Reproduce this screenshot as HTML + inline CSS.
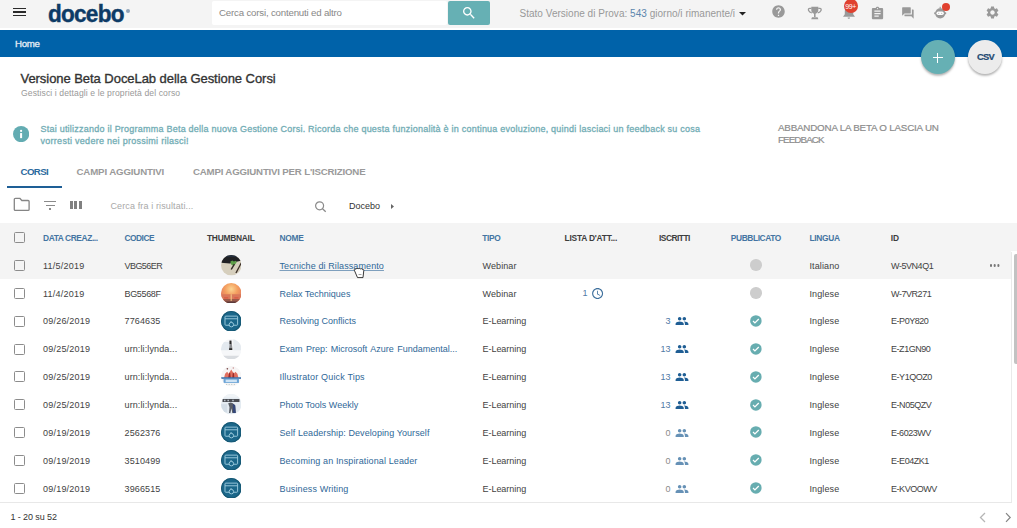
<!DOCTYPE html>
<html><head><meta charset="utf-8">
<style>
*{box-sizing:border-box;margin:0;padding:0}
html,body{width:1017px;height:528px;overflow:hidden;background:#fff}
body{position:relative;font-family:"Liberation Sans",sans-serif;color:#333}
.a{position:absolute;white-space:nowrap}
svg{position:absolute;display:block}
#topbar{position:absolute;left:0;top:0;width:1017px;height:28px;background:#f4f4f4}
#bluebar{position:absolute;left:0;top:30px;width:1017px;height:26.6px;background:#0062a9}

.row{position:absolute;left:0;width:1011px;height:27.84px}
.row .c{position:absolute;top:2px;line-height:27.84px;font-size:9px;color:#424242;white-space:nowrap;letter-spacing:0.12px}
.hd{position:absolute;left:0;top:223px;width:1017px;height:27.8px;background:#f4f4f4}
.hd .c{position:absolute;top:1.8px;line-height:27.8px;font-size:8.4px;font-weight:700;color:#3d3d3d;white-space:nowrap}
.hd .b{color:#4474a2}
.cb{position:absolute;left:13.5px;top:9.2px;width:11px;height:11px;border:1.3px solid #8c8c8c;border-radius:1.5px;background:transparent}
.th{position:absolute;left:220.5px;top:4.3px;width:20.5px;height:20.5px}
.lk{color:#2f6898 !important;letter-spacing:0px !important}
.nb{color:#4f7aa6 !important}
.nb.z{color:#8a8a8a !important}
.clk{position:absolute;left:590.9px;top:8.5px;width:13.2px;height:13.2px}
.ppl{position:absolute;left:674.7px;top:8px;width:14px;height:14px}
.ppl.z{opacity:.68}
.gd{position:absolute;left:750.25px;top:8.4px;width:11.5px;height:11.5px;border-radius:50%;background:#cdcdcd}
.ck{position:absolute;left:749.1px;top:7.6px;width:13.8px;height:13.8px}
.dots{position:absolute;left:989.5px;top:13.4px;width:2.6px;height:2.6px;border-radius:50%;background:#777;box-shadow:3.7px 0 0 #777,7.4px 0 0 #777}
</style></head><body>
<div id="topbar"></div>
<div id="bluebar"></div>

<!-- hamburger -->
<div class="a" style="left:13.3px;top:7.9px;width:12.7px;height:1.35px;background:#2a2a2a"></div>
<div class="a" style="left:13.3px;top:11.3px;width:12.7px;height:1.35px;background:#2a2a2a"></div>
<div class="a" style="left:13.3px;top:14.9px;width:12.7px;height:1.35px;background:#2a2a2a"></div>

<!-- logo -->
<div class="a" id="logo" style="left:48px;top:-1.3px;font-size:24px;font-weight:700;letter-spacing:-0.8px;color:#0d3b66;line-height:30px;transform:scaleX(0.94);transform-origin:0 0;-webkit-text-stroke:0.4px #0d3b66">docebo</div>
<div class="a" style="left:126px;top:9px;width:4px;height:4px;border-radius:50%;background:#8fa3b8"></div>

<!-- search -->
<div class="a" style="left:212px;top:1px;width:235px;height:24px;background:#fff;border-radius:2px"></div>
<div class="a" id="srch" style="left:219px;top:7px;font-size:9.7px;line-height:12px;color:#888;letter-spacing:-0.19px">Cerca corsi, contenuti ed altro</div>
<div class="a" style="left:448px;top:1px;width:42px;height:24px;background:#66b0b4;border-radius:2px"></div>
<svg style="left:461px;top:5px" width="16" height="16" viewBox="0 0 24 24"><path fill="#fff" d="M15.5 14h-.79l-.28-.27C15.41 12.590 16 11.11 16 9.5 16 5.91 13.09 3 9.5 3S3 5.91 3 9.5 5.91 16 9.5 16c1.61 0 3.09-.59 4.230-1.57l.27.28v.79l5 4.99L20.49 19l-4.99-5zm-6 0C7.01 14 5 11.99 5 9.5S7.01 5 9.5 5 14 7.01 14 9.5 11.99 14 9.5 14z"/></svg>

<!-- trial status -->
<div class="a" id="stato" style="left:519.5px;top:8.3px;font-size:10px;line-height:12px;color:#999;letter-spacing:0.02px">Stato Versione di Prova: <span style="color:#5b86ad">543</span> giorno/i rimanente/i</div>
<svg style="left:739px;top:12px" width="7" height="4" viewBox="0 0 7 4"><path d="M0 0h7L3.5 3.6z" fill="#222"/></svg>

<!-- header icons -->
<svg style="left:771px;top:4.3px" width="15" height="15" viewBox="0 0 24 24"><path fill="#999" d="M12 2C6.48 2 2 6.48 2 12s4.48 10 10 10 10-4.48 10-10S17.52 2 12 2zm1 17h-2v-2h2v2zm2.07-7.750l-.9.92C13.45 12.9 13 13.5 13 15h-2v-.5c0-1.1.45-2.1 1.17-2.83l1.24-1.26c.37-.36.59-.86.59-1.41 0-1.1-.9-2-2-2s-2 .9-2 2H8c0-2.210 1.79-4 4-4s4 1.79 4 4c0 .88-.36 1.68-.93 2.25z"/></svg>
<svg style="left:807px;top:6px" width="16" height="14" viewBox="0 0 16 14"><path fill="#999" d="M4.3 .7H11.3V4.3C11.3 6.2 9.9 7.5 8.6 7.8V11H7V7.8C5.7 7.5 4.3 6.2 4.3 4.3zM5 11.3H10.6L11.4 13.3H4.2z"/><path fill="none" stroke="#999" stroke-width="1.3" d="M4.4 2.3H2.7C1.5 2.3 1.2 3.5 1.6 4.5 2.1 5.8 3.3 6.6 4.8 6.8M11.2 2.3H12.9C14.1 2.3 14.4 3.5 14 4.5 13.5 5.8 12.3 6.6 10.8 6.8"/></svg>
<svg style="left:841px;top:4px" width="16" height="16" viewBox="0 0 16 16"><path fill="#999" d="M3.8 7C3.8 4 5.6 2 8 2S12.2 4 12.2 7V10.3L14 12.8H2L3.8 10.3z"/><path fill="#999" d="M6.6 13.5H9C9 14.3 8.5 14.8 7.8 14.8S6.6 14.3 6.6 13.5z"/></svg>
<div class="a" style="left:843.8px;top:-1px;width:13.8px;height:13.8px;border-radius:50%;background:#e0412f;color:#fff;font-size:7px;font-weight:400;line-height:15.6px;text-align:center;letter-spacing:-0.35px">99+</div>
<svg style="left:869.6px;top:5.9px" width="15" height="15" viewBox="0 0 24 24"><path fill="#999" d="M19 3h-4.18C14.4 1.84 13.3 1 12 1c-1.3 0-2.4.84-2.82 2H5c-1.1 0-2 .9-2 2v14c0 1.1.9 2 2 2h14c1.1 0 2-.9 2-2V5c0-1.1-.9-2-2-2zm-7 0c.55 0 1 .45 1 1s-.45 1-1 1-1-.45-1-1 .45-1 1-1zm2 14H7v-2h7v2zm3-4H7v-2h10v2zm0-4H7V7h10v2z"/></svg>
<svg style="left:901.35px;top:5.65px" width="13.8" height="13.8" viewBox="0 0 24 24"><path fill="#999" d="M21 6h-2v9H6v2c0 .55.45 1 1 1h11l4 4V7c0-.55-.45-1-1-1zm-4 6V3c0-.55-.45-1-1-1H3c-.55 0-1 .45-1 1v14l4-4h10c.55 0 1-.45 1-1z"/></svg>
<!-- robot -->
<svg style="left:933px;top:6px" width="14" height="13" viewBox="0 0 14 13"><circle cx="7.2" cy="7.3" r="5.1" fill="#999"/><rect x="1.2" y="6.3" width="1.6" height="2" rx=".5" fill="#999"/><rect x="11.6" y="6.3" width="1.6" height="2" rx=".5" fill="#999"/><rect x="6.6" y="0.8" width="1.2" height="2" fill="#999"/><rect x="3.5" y="5.6" width="7.3" height="3.4" rx="1.7" fill="#fff"/><circle cx="5.7" cy="7.3" r=".55" fill="#aaa"/><circle cx="8.7" cy="7.3" r=".55" fill="#aaa"/></svg>
<div class="a" style="left:941.8px;top:2.5px;width:8.2px;height:8.2px;border-radius:50%;background:#e0402e"></div>
<svg style="left:984.7px;top:5px" width="15" height="15" viewBox="0 0 24 24"><path fill="#999" d="M19.14 12.94c.04-.3.06-.61.06-.94 0-.32-.02-.64-.07-.94l2.03-1.58c.18-.14.23-.41.12-.61l-1.92-3.32c-.12-.22-.37-.29-.59-.22l-2.39.96c-.5-.38-1.03-.7-1.62-.94l-.36-2.54c-.04-.24-.24-.41-.48-.41h-3.84c-.24 0-.43.17-.47.41l-.36 2.54c-.59.24-1.13.57-1.62.94l-2.39-.96c-.22-.08-.47 0-.59.22L2.74 8.87c-.12.21-.08.47.12.61l2.03 1.58c-.05.3-.09.63-.09.94s.02.64.07.94l-2.03 1.58c-.18.14-.23.41-.12.61l1.92 3.32c.12.22.37.29.59.22l2.39-.96c.5.38 1.03.7 1.62.94l.36 2.54c.05.24.24.41.48.41h3.84c.24 0 .44-.17.47-.41l.36-2.54c.59-.24 1.13-.56 1.62-.94l2.39.96c.22.08.47 0 .59-.22l1.92-3.32c.12-.22.07-.47-.12-.61l-2.01-1.58zM12 15.6c-1.98 0-3.6-1.62-3.6-3.6s1.62-3.6 3.6-3.6 3.6 1.62 3.6 3.6-1.62 3.6-3.6 3.6z"/></svg>

<!-- breadcrumb -->
<div class="a" id="home" style="left:15px;top:38px;font-size:9.7px;line-height:12px;color:#e6eef6;font-weight:400;letter-spacing:-0.3px;-webkit-text-stroke:0.3px #e6eef6">Home</div>

<!-- FABs -->
<div class="a" style="left:920.6px;top:39.7px;width:34px;height:34px;border-radius:50%;background:#66b0b4;box-shadow:0 1.8px 2.2px rgba(0,0,0,.3)"></div>
<div class="a" style="left:932.6px;top:56.9px;width:10px;height:1.4px;background:#fff"></div>
<div class="a" style="left:936.9px;top:52.6px;width:1.4px;height:10px;background:#fff"></div>
<div class="a" style="left:968.2px;top:39.7px;width:34.3px;height:34.3px;border-radius:50%;background:#ececec;box-shadow:0 1.8px 2.2px rgba(0,0,0,.3)"></div>
<div class="a" id="csv" style="left:977px;top:50.7px;font-size:9.3px;line-height:12px;font-weight:700;color:#1f4a72;letter-spacing:-0.65px;-webkit-text-stroke:0.2px #1f4a72">CSV</div>

<!-- title -->
<div class="a" id="title" style="left:20.5px;top:70.7px;font-size:13px;line-height:16px;color:#333;letter-spacing:-0.05px;-webkit-text-stroke:0.35px #333">Versione Beta DoceLab della Gestione Corsi</div>
<div class="a" id="sub" style="left:21px;top:87.9px;font-size:8.6px;line-height:10px;color:#999;letter-spacing:0.1px">Gestisci i dettagli e le proprietà del corso</div>


<!-- svg defs -->
<svg width="0" height="0" style="position:absolute">
<defs>
<symbol id="clock" viewBox="0 0 24 24"><path fill="#3d6f9c" d="M11.99 2C6.47 2 2 6.48 2 12s4.47 10 9.99 10C17.52 22 22 17.520 22 12S17.52 2 11.99 2zM12 20c-4.42 0-8-3.58-8-8s3.58-8 8-8 8 3.58 8 8-3.58 8-8 8zm.5-13H11v6l5.25 3.15.75-1.23-4.5-2.67z"/></symbol>
<symbol id="ppl" viewBox="0 0 24 24"><path fill="#1f5e94" d="M16 11c1.66 0 2.99-1.34 2.99-3S17.66 5 16 5c-1.66 0-3 1.34-3 3s1.34 3 3 3zm-8 0c1.66 0 2.99-1.34 2.99-3S9.66 5 8 5C6.34 5 5 6.34 5 8s1.34 3 3 3zm0 2c-2.33 0-7 1.17-7 3.5V19h14v-2.5c0-2.33-4.67-3.5-7-3.5zm8 0c-.29 0-.62.02-.97.05 1.16.84 1.970 1.97 1.97 3.45V19h6v-2.5c0-2.33-4.67-3.5-7-3.5z"/></symbol>
<symbol id="chk" viewBox="0 0 24 24"><circle cx="12" cy="12" r="10" fill="#67adb0"/><path fill="none" stroke="#fff" stroke-width="2.2" d="M7 12.2l3.3 3.3L17 8.8"/></symbol>
<symbol id="t1" viewBox="0 0 20 20"><clipPath id="cp1"><circle cx="10" cy="10" r="10"/></clipPath><g clip-path="url(#cp1)"><rect width="20" height="20" fill="#d6cfbd"/><path d="M0 0h20v5.6L14 6.8 8.7 8.4 0 7.6z" fill="#202124"/><path d="M4 0h12v2H4z" fill="#263447" opacity=".7"/><path d="M9 6.5l2-1.2 1.5 1 2-.8.8 1.6-1.6 2.2-2.2.9-1.4-.6z" fill="#5ea04a"/><path d="M9.3 13.8l3.2-5.2 1.2.6-3.1 5.2z" fill="#2f2a26"/><path d="M14 17.3l5.2-9.8 1.1.6-5.1 9.8z" fill="#3b2f28"/></g></symbol>
<symbol id="t2" viewBox="0 0 20 20"><clipPath id="cp2"><circle cx="10" cy="10" r="10"/></clipPath><radialGradient id="g2" cx=".5" cy=".3" r=".55"><stop offset="0" stop-color="#fbd592"/><stop offset=".55" stop-color="#f4a060"/><stop offset="1" stop-color="#e58060"/></radialGradient><g clip-path="url(#cp2)"><rect width="20" height="20" fill="url(#g2)"/><path d="M0 11h20v9H0z" fill="#d9785a"/><path d="M0 15.5h20v4.5H0z" fill="#9a5a4a"/><path d="M0 18h20v2H0z" fill="#5a3a3a"/><path d="M9.3 11h1.4v6.5H9.3z" fill="#f8cf8a" opacity=".7"/><path d="M3 14h4v1H3zM13 14h4v1h-4z" fill="#d84a3a" opacity=".7"/></g></symbol>
<symbol id="t3" viewBox="0 0 20 20"><circle cx="10" cy="10" r="10" fill="#1b678a"/><circle cx="10" cy="10" r="9.5" fill="none" stroke="#175873" stroke-width="1"/><rect x="3.9" y="5" width="12.3" height="8.9" rx=".8" fill="none" stroke="#9fcde0" stroke-width=".9"/><path d="M3.9 7.6h12.3" stroke="#9fcde0" stroke-width=".9"/><circle cx="10.1" cy="13.3" r="2.2" fill="#1b678a" stroke="#9fcde0" stroke-width=".9"/><path d="M9.8 9.8v1.4" stroke="#9fcde0" stroke-width=".9"/></symbol>
<symbol id="t4" viewBox="0 0 20 20"><clipPath id="cp4"><circle cx="10" cy="10" r="10"/></clipPath><g clip-path="url(#cp4)"><rect width="20" height="20" fill="#f6f7f9"/><path d="M0 3h8v8H0z" fill="#e3e9ef"/><path d="M12 0h8v11h-8z" fill="#e6ebf0"/><path d="M8.3 1.5h2l.5 5 .5 4.3H7.7l.5-4.3z" fill="#8a8c90"/><path d="M8.4 1.6h1.6v3.2H8.4zM8 9h2.8v1.8H8z" fill="#2a2a2a"/><path d="M0 16.3h20v4H0z" fill="#d9dce0"/></g></symbol>
<symbol id="t5" viewBox="0 0 20 20"><clipPath id="cp5"><circle cx="10" cy="10" r="10"/></clipPath><g clip-path="url(#cp5)"><rect width="20" height="20" fill="#f7f5f5"/><path d="M3 11.5l1-4 2-2 1.5 2 2.5-4 2.5 4 1.5-2 2 2 1 4z" fill="#e07060"/><path d="M7 11.5l1-5h1l.5 5zM11 11.5l.5-5h1l.5 5z" fill="#9a2a2a"/><circle cx="6.2" cy="2.8" r=".8" fill="#7a4a4a"/><circle cx="12" cy="2" r=".7" fill="#c58a8a"/><rect x="0" y="11" width="20" height="1.5" fill="#2f6aa8"/><rect x="2.5" y="12.5" width="15" height="4" fill="#6aa3d6"/><rect x="4.5" y="13.3" width="11" height="2.4" fill="#cfe4f5"/><path d="M5 18h10" stroke="#8aa" stroke-width=".6" stroke-dasharray="1 1.5"/></g></symbol>
<symbol id="t6" viewBox="0 0 20 20"><clipPath id="cp6"><circle cx="10" cy="10" r="10"/></clipPath><g clip-path="url(#cp6)"><rect width="20" height="20" fill="#e4ebf1"/><path d="M0 0h20v3.5H0z" fill="#f0f4f7"/><path d="M1.5 4.8h16.5v3H1.5z" fill="#4a4c52"/><path d="M3 5.5h1.4v1.6H3zM6.3 5.5h1.4v1.6H6.3zM11 5.5h1.4v1.6H11z" fill="#c3ccd5"/><path d="M7 9l2.5-.8 2 .8 2.3 2 .6 7.5H11l-.8-4.5-1 4.5H7.8l.5-5.5z" fill="#5a5e66"/><path d="M11.5 9.5l2.3 1.5.6 7.5h-2.6z" fill="#34477a"/><path d="M0 10h6v8H0z" fill="#d3dde6"/></g></symbol>
</defs></svg>

<!-- info banner -->
<svg style="left:13px;top:125.8px" width="16.2" height="16.2" viewBox="0 0 16 16"><circle cx="8" cy="8" r="8" fill="#63acb2"/><rect x="7" y="7" width="2" height="5" fill="#fff"/><circle cx="8" cy="4.9" r="1.1" fill="#fff"/></svg>
<div class="a" id="info1" style="left:40.5px;top:124.2px;font-size:9px;line-height:11.7px;color:#72adb5;font-weight:400;letter-spacing:0.23px;-webkit-text-stroke:0.3px #72adb5">Stai utilizzando il Programma Beta della nuova Gestione Corsi. Ricorda che questa funzionalità è in continua evoluzione, quindi lasciaci un feedback su cosa<br><span style="letter-spacing:0.28px">vorresti vedere nei prossimi rilasci!</span></div>
<div class="a" id="abb" style="left:778px;top:122px;font-size:9.8px;line-height:12.4px;color:#8c8c8c;letter-spacing:-0.2px;-webkit-text-stroke:0.2px #8c8c8c">ABBANDONA LA BETA O LASCIA UN<br><span style="letter-spacing:-0.9px">FEEDBACK</span></div>

<!-- tabs -->
<div class="a" id="tab1" style="left:20.5px;top:165.7px;font-size:9.7px;line-height:12px;font-weight:700;color:#2b6a9e;letter-spacing:-0.6px">CORSI</div>
<div class="a" id="tab2" style="left:76.5px;top:165.7px;font-size:9.7px;line-height:12px;font-weight:700;color:#9a9a9a;letter-spacing:-0.15px">CAMPI AGGIUNTIVI</div>
<div class="a" id="tab3" style="left:193px;top:165.7px;font-size:9.7px;line-height:12px;font-weight:700;color:#9a9a9a;letter-spacing:-0.2px">CAMPI AGGIUNTIVI PER L'ISCRIZIONE</div>
<div class="a" style="left:7px;top:185.5px;width:55px;height:2px;background:#1e5f96"></div>

<!-- toolbar -->
<svg style="left:13.4px;top:197.4px" width="17.5" height="15" viewBox="0 0 17.5 15"><path d="M2.5 1.3h4.3l2 2.2h6.3a1 1 0 0 1 1 1v7.9a1 1 0 0 1-1 1H2.3a1 1 0 0 1-1-1V2.5a1.2 1.2 0 0 1 1.2-1.2z" fill="none" stroke="#858585" stroke-width="1.3" stroke-linejoin="round"/></svg>
<div class="a" style="left:43.9px;top:201.2px;width:12.5px;height:1.25px;background:#8a8a8a"></div>
<div class="a" style="left:46px;top:204.7px;width:8.5px;height:1.25px;background:#8a8a8a"></div>
<div class="a" style="left:48.7px;top:208.3px;width:2.8px;height:1.25px;background:#8a8a8a"></div>
<div class="a" style="left:70px;top:200.5px;width:3px;height:8.8px;background:#808080"></div>
<div class="a" style="left:74.4px;top:200.5px;width:3px;height:8.8px;background:#808080"></div>
<div class="a" style="left:78.8px;top:200.5px;width:3px;height:8.8px;background:#808080"></div>
<div class="a" id="cfr" style="left:110.5px;top:200px;font-size:9px;line-height:12px;color:#a8a8a8;letter-spacing:0.12px">Cerca fra i risultati...</div>
<svg style="left:313.5px;top:200px" width="13" height="13" viewBox="0 0 13 13"><circle cx="5.6" cy="5.8" r="4" fill="none" stroke="#8a8a8a" stroke-width="1.2"/><path d="M8.5 8.7l3.2 3" stroke="#8a8a8a" stroke-width="1.3"/></svg>
<div class="a" id="doc" style="left:349px;top:199.6px;font-size:9px;line-height:12px;color:#333">Docebo</div>
<svg style="left:391px;top:204px" width="3" height="5" viewBox="0 0 3 5"><path d="M0 0l3 2.5L0 5z" fill="#666"/></svg>

<!-- table header -->
<div class="hd">
<i class="cb" style="top:8.7px"></i>
<span class="c b" style="left:43px;letter-spacing:-0.4px">DATA CREAZ...</span>
<span class="c b" style="left:124.5px;letter-spacing:-0.5px">CODICE</span>
<span class="c" style="left:207px;letter-spacing:-0.25px">THUMBNAIL</span>
<span class="c b" style="left:279.5px;letter-spacing:-0.25px">NOME</span>
<span class="c b" style="left:482.3px;letter-spacing:-0.4px">TIPO</span>
<span class="c" style="left:564.5px;letter-spacing:-0.2px">LISTA D'ATT...</span>
<span class="c" style="left:659px;letter-spacing:-0.5px">ISCRITTI</span>
<span class="c b" style="left:730.8px;letter-spacing:-0.4px">PUBBLICATO</span>
<span class="c b" style="left:809.5px;letter-spacing:-0.3px">LINGUA</span>
<span class="c" style="left:890.7px">ID</span>
</div>
<div class="a" style="left:0;top:250.8px;width:1011px;height:27.84px;background:#f4f4f4"></div>
<div class="row" style="top:250.80px">
<i class="cb"></i>
<span class="c" style="left:43px;letter-spacing:0.22px">11/5/2019</span>
<span class="c" style="left:124.5px;letter-spacing:-0.55px">VBG56ER</span>
<svg class="th" viewBox="0 0 20 20"><use href="#t1"/></svg>
<span class="c lk" style="left:279.5px;text-decoration:underline;text-underline-offset:1.2px;text-decoration-color:#7e9fbd;text-decoration-thickness:1px;letter-spacing:0.1px !important">Tecniche di Rilassamento</span>
<span class="c" style="left:482.5px;letter-spacing:0.1px">Webinar</span>
<i class="gd"></i>
<span class="c" style="left:809.5px">Italiano</span>
<span class="c" style="left:891px;letter-spacing:-0.45px">W-5VN4Q1</span>
<i class="dots"></i>
</div>
<div class="row" style="top:278.64px">
<i class="cb"></i>
<span class="c" style="left:43px;letter-spacing:0.22px">11/4/2019</span>
<span class="c" style="left:124.5px;letter-spacing:-0.33px">BG5568F</span>
<svg class="th" viewBox="0 0 20 20"><use href="#t2"/></svg>
<span class="c lk" style="left:279.5px">Relax Techniques</span>
<span class="c" style="left:482.5px;letter-spacing:0.1px">Webinar</span>
<span class="c nb" style="left:582.5px;top:1px">1</span><svg class="clk" viewBox="0 0 24 24"><use href="#clock"/></svg>
<i class="gd"></i>
<span class="c" style="left:809.5px">Inglese</span>
<span class="c" style="left:891px;letter-spacing:-0.45px">W-7VR271</span>
</div>
<div class="row" style="top:306.48px">
<i class="cb"></i>
<span class="c" style="left:43px;letter-spacing:0.22px">09/26/2019</span>
<span class="c" style="left:124.5px">7764635</span>
<svg class="th" viewBox="0 0 20 20"><use href="#t3"/></svg>
<span class="c lk" style="left:279.5px">Resolving Conflicts</span>
<span class="c" style="left:482.5px;letter-spacing:-0.04px">E-Learning</span>
<span class="c nb" style="right:340.3px">3</span><svg class="ppl" viewBox="0 0 24 24"><use href="#ppl"/></svg>
<svg class="ck" viewBox="0 0 24 24"><use href="#chk"/></svg>
<span class="c" style="left:809.5px">Inglese</span>
<span class="c" style="left:891px;letter-spacing:-0.45px">E-P0Y820</span>
</div>
<div class="row" style="top:334.32px">
<i class="cb"></i>
<span class="c" style="left:43px;letter-spacing:0.22px">09/25/2019</span>
<span class="c" style="left:124.5px">urn:li:lynda...</span>
<svg class="th" viewBox="0 0 20 20"><use href="#t4"/></svg>
<span class="c lk" style="left:279.5px;word-spacing:0.9px">Exam Prep: Microsoft Azure Fundamental...</span>
<span class="c" style="left:482.5px;letter-spacing:-0.04px">E-Learning</span>
<span class="c nb" style="right:340.3px">13</span><svg class="ppl" viewBox="0 0 24 24"><use href="#ppl"/></svg>
<svg class="ck" viewBox="0 0 24 24"><use href="#chk"/></svg>
<span class="c" style="left:809.5px">Inglese</span>
<span class="c" style="left:891px;letter-spacing:-0.45px">E-Z1GN90</span>
</div>
<div class="row" style="top:362.16px">
<i class="cb"></i>
<span class="c" style="left:43px;letter-spacing:0.22px">09/25/2019</span>
<span class="c" style="left:124.5px">urn:li:lynda...</span>
<svg class="th" viewBox="0 0 20 20"><use href="#t5"/></svg>
<span class="c lk" style="left:279.5px;letter-spacing:0.17px !important">Illustrator Quick Tips</span>
<span class="c" style="left:482.5px;letter-spacing:-0.04px">E-Learning</span>
<span class="c nb" style="right:340.3px">13</span><svg class="ppl" viewBox="0 0 24 24"><use href="#ppl"/></svg>
<svg class="ck" viewBox="0 0 24 24"><use href="#chk"/></svg>
<span class="c" style="left:809.5px">Inglese</span>
<span class="c" style="left:891px;letter-spacing:-0.45px">E-Y1QOZ0</span>
</div>
<div class="row" style="top:390.00px">
<i class="cb"></i>
<span class="c" style="left:43px;letter-spacing:0.22px">09/25/2019</span>
<span class="c" style="left:124.5px">urn:li:lynda...</span>
<svg class="th" viewBox="0 0 20 20"><use href="#t6"/></svg>
<span class="c lk" style="left:279.5px">Photo Tools Weekly</span>
<span class="c" style="left:482.5px;letter-spacing:-0.04px">E-Learning</span>
<span class="c nb" style="right:340.3px">13</span><svg class="ppl" viewBox="0 0 24 24"><use href="#ppl"/></svg>
<svg class="ck" viewBox="0 0 24 24"><use href="#chk"/></svg>
<span class="c" style="left:809.5px">Inglese</span>
<span class="c" style="left:891px;letter-spacing:-0.45px">E-N05QZV</span>
</div>
<div class="row" style="top:417.84px">
<i class="cb"></i>
<span class="c" style="left:43px;letter-spacing:0.22px">09/19/2019</span>
<span class="c" style="left:124.5px">2562376</span>
<svg class="th" viewBox="0 0 20 20"><use href="#t3"/></svg>
<span class="c lk" style="left:279.5px;letter-spacing:0.08px !important">Self Leadership: Developing Yourself</span>
<span class="c" style="left:482.5px;letter-spacing:-0.04px">E-Learning</span>
<span class="c nb z" style="right:340.3px">0</span><svg class="ppl z" viewBox="0 0 24 24"><use href="#ppl"/></svg>
<svg class="ck" viewBox="0 0 24 24"><use href="#chk"/></svg>
<span class="c" style="left:809.5px">Inglese</span>
<span class="c" style="left:891px;letter-spacing:-0.45px">E-6023WV</span>
</div>
<div class="row" style="top:445.68px">
<i class="cb"></i>
<span class="c" style="left:43px;letter-spacing:0.22px">09/19/2019</span>
<span class="c" style="left:124.5px">3510499</span>
<svg class="th" viewBox="0 0 20 20"><use href="#t3"/></svg>
<span class="c lk" style="left:279.5px;letter-spacing:0.12px !important">Becoming an Inspirational Leader</span>
<span class="c" style="left:482.5px;letter-spacing:-0.04px">E-Learning</span>
<span class="c nb z" style="right:340.3px">0</span><svg class="ppl z" viewBox="0 0 24 24"><use href="#ppl"/></svg>
<svg class="ck" viewBox="0 0 24 24"><use href="#chk"/></svg>
<span class="c" style="left:809.5px">Inglese</span>
<span class="c" style="left:891px;letter-spacing:-0.45px">E-E04ZK1</span>
</div>
<div class="row" style="top:473.52px">
<i class="cb"></i>
<span class="c" style="left:43px;letter-spacing:0.22px">09/19/2019</span>
<span class="c" style="left:124.5px">3966515</span>
<svg class="th" viewBox="0 0 20 20"><use href="#t3"/></svg>
<span class="c lk" style="left:279.5px;letter-spacing:0.13px !important">Business Writing</span>
<span class="c" style="left:482.5px;letter-spacing:-0.04px">E-Learning</span>
<span class="c nb z" style="right:340.3px">0</span><svg class="ppl z" viewBox="0 0 24 24"><use href="#ppl"/></svg>
<svg class="ck" viewBox="0 0 24 24"><use href="#chk"/></svg>
<span class="c" style="left:809.5px">Inglese</span>
<span class="c" style="left:891px;letter-spacing:-0.45px">E-KVOOWV</span>
</div>
<!-- table borders / scrollbar -->
<div class="a" style="left:0;top:501.6px;width:1012px;height:1px;background:#e8e8e8"></div>
<div class="a" style="left:1011.2px;top:252px;width:1px;height:250px;background:#eaeaea"></div>
<div class="a" style="left:1013.8px;top:253.8px;width:5px;height:110px;border-radius:2px;background:#c2c2c2"></div>

<!-- footer -->
<div class="a" id="pg" style="left:10.5px;top:511px;font-size:9px;line-height:12px;color:#333;letter-spacing:-0.1px">1 - 20 su 52</div>
<svg style="left:979px;top:512px" width="8" height="11" viewBox="0 0 8 11"><path d="M6 1L1.5 5.5 6 10" fill="none" stroke="#b5b5b5" stroke-width="1.3"/></svg>
<svg style="left:1004.3px;top:512px" width="8" height="11" viewBox="0 0 8 11"><path d="M2 1.2l4.2 4.3L2 9.8" fill="none" stroke="#858585" stroke-width="1.2"/></svg>

<!-- cursor -->
<svg style="left:353px;top:267.8px" width="12" height="11" viewBox="0 0 12 11"><path d="M1.3 2.2C1 1.2 2.2.6 2.9 1.3 3 .3 4.6 0 5.1 1 5.4 0 7 0 7.3 1.1 7.7.4 9.4.5 9.6 1.6 10 1.1 10.9 1.5 10.8 2.3L10 9.6H4.5z" fill="#fff" stroke="#222" stroke-width=".9" stroke-linejoin="round"/><path d="M5.5 6.5h3" stroke="#999" stroke-width=".9"/></svg>
</body></html>
